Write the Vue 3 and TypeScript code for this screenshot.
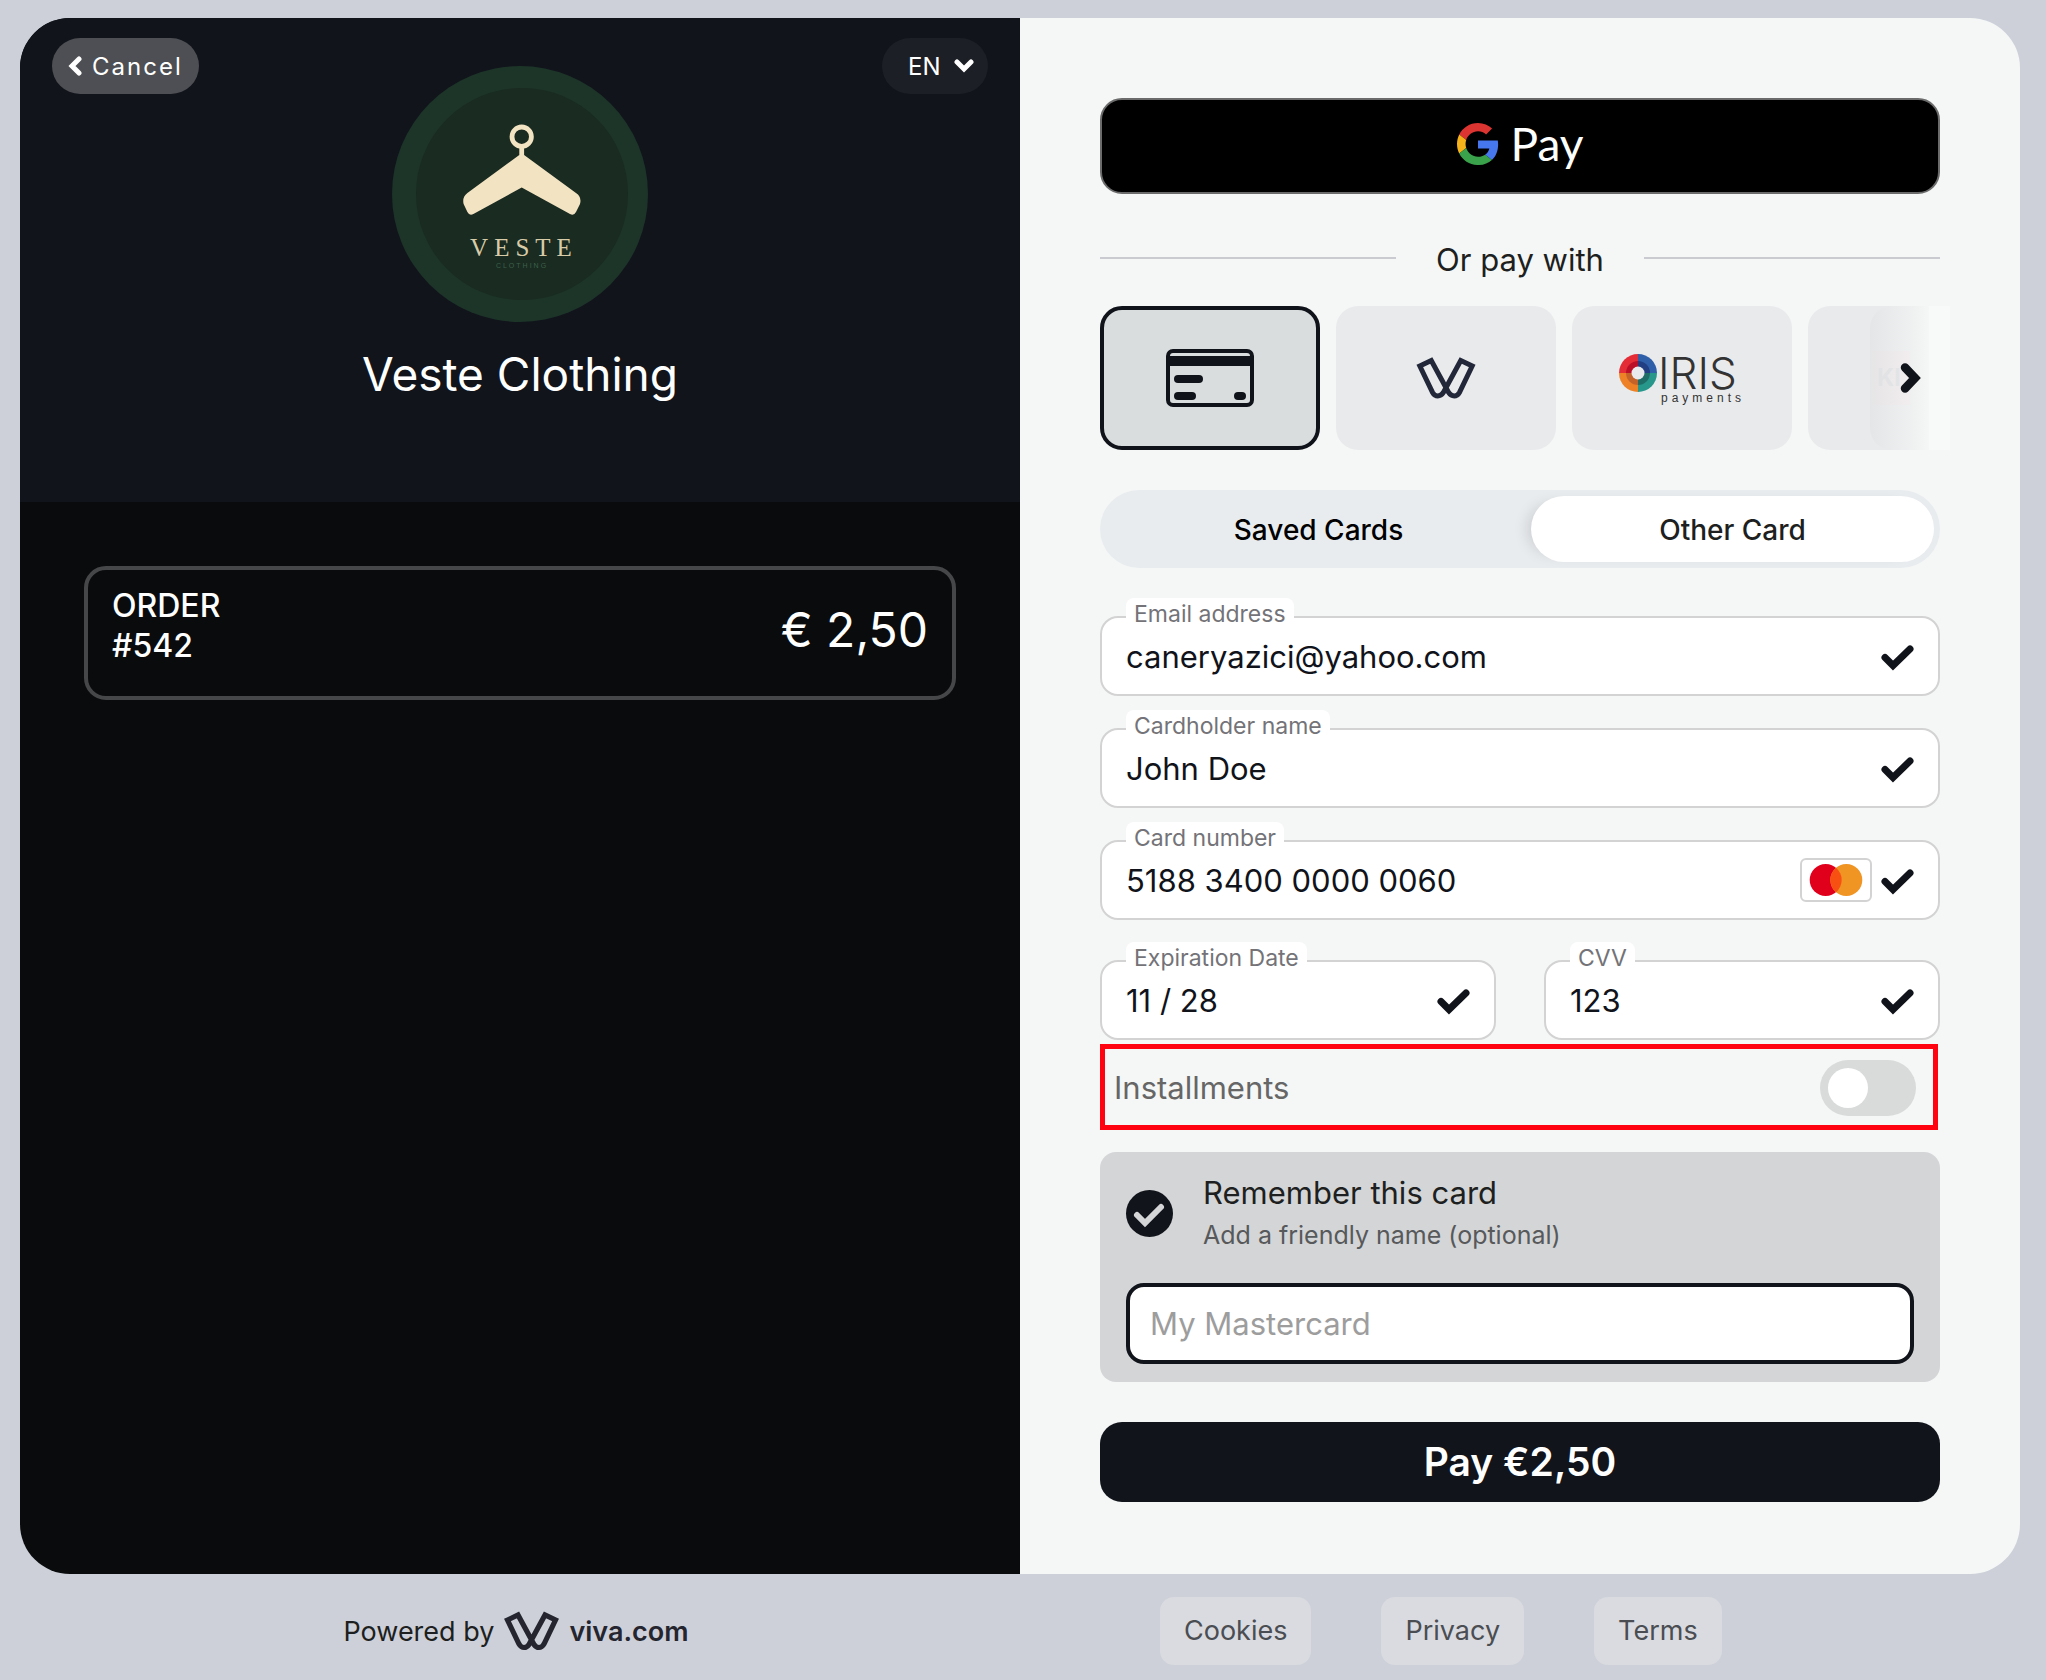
<script setup lang="ts">
import { ref } from 'vue'

interface Field {
  id: string
  label: string
  value: string
  brand?: boolean
}

const wideFields = ref<Field[]>([
  { id: 'email', label: 'Email address', value: 'caneryazici@yahoo.com' },
  { id: 'holder', label: 'Cardholder name', value: 'John Doe' },
  { id: 'number', label: 'Card number', value: '5188 3400 0000 0060', brand: true },
])

const shortFields = ref<Field[]>([
  { id: 'expiry', label: 'Expiration Date', value: '11 / 28' },
  { id: 'cvv', label: 'CVV', value: '123' },
])

const language = ref('EN')
const cardTab = ref<'saved' | 'other'>('other')
const installments = ref(false)
const remember = ref(true)
const friendlyName = ref('')
const footerLinks = ['Cookies', 'Privacy', 'Terms']
</script>

<template>
  <div class="page">
    <main class="checkout">
      <section class="summary">
        <header class="merchant">
          <div class="topbar">
            <button type="button" class="cancel">
              <svg width="14" height="20" viewBox="0 0 14 20" aria-hidden="true">
                <path d="M11 3 L4 10 L11 17" fill="none" stroke="#fff" stroke-width="5" stroke-linecap="round" />
              </svg>
              <span>Cancel</span>
            </button>
            <div class="language">
              <select v-model="language" aria-label="Language">
                <option>EN</option>
              </select>
              <svg width="20" height="14" viewBox="0 0 20 14" aria-hidden="true">
                <path d="M3 3 L10 10 L17 3" fill="none" stroke="#fff" stroke-width="5" stroke-linecap="round" />
              </svg>
            </div>
          </div>
          <svg class="logo" viewBox="0 0 256 256" role="img" aria-label="Veste Clothing logo">
            <circle cx="128" cy="128" r="128" fill="#1d3429" />
            <circle cx="130" cy="128" r="106" fill="#1a2b21" />
            <g fill="#f2e3c2">
              <circle cx="129.700" cy="70.700" r="9.700" fill="none" stroke="#f2e3c2" stroke-width="4.800" />
              <path d="M127.300 81h4.800v8L184 127Q190 131 188 138L184 146Q182 150 178 148L129.700 121.500L81.400 148Q77.400 150 75.400 146L71.600 138Q70 131 75.400 127L127.300 89Z" />
            </g>
            <text x="132" y="190" text-anchor="middle" font-family="Liberation Serif, serif" font-size="25" letter-spacing="6" fill="#d8cba8">VESTE</text>
            <text x="130" y="202" text-anchor="middle" font-family="Liberation Sans, sans-serif" font-size="7" letter-spacing="2" fill="#3a6049">CLOTHING</text>
          </svg>
          <h1>Veste Clothing</h1>
        </header>
        <div class="order">
          <p class="order-name">ORDER<br />#542</p>
          <p class="order-total">€ 2,50</p>
        </div>
      </section>

      <section class="payment">
        <button type="button" class="gpay" aria-label="Pay with Google Pay">
          <svg width="42" height="42" viewBox="2 2 44 44" aria-hidden="true">
            <g transform="translate(2 2) scale(.917)">
              <path fill="#dc3430" d="M24 9.500c3.540 0 6.710 1.220 9.210 3.600l6.850-6.850C35.900 2.380 30.470 0 24 0 14.620 0 6.510 5.380 2.560 13.220l7.980 6.190C12.430 13.720 17.740 9.500 24 9.500z" />
              <path fill="#4677ee" d="M46.980 24.550c0-1.570-.15-3.090-.38-4.550H24v9.020h12.940c-.58 2.960-2.260 5.480-4.780 7.180l7.730 6c4.510-4.180 7.090-10.360 7.090-17.650z" />
              <path fill="#f5b21a" d="M10.530 28.590c-.48-1.450-.76-2.990-.76-4.590s.27-3.140.76-4.590l-7.980-6.190C.92 16.460 0 20.120 0 24c0 3.880.92 7.540 2.560 10.780l7.970-6.190z" />
              <path fill="#3ba24c" d="M24 48c6.480 0 11.930-2.130 15.890-5.810l-7.730-6c-2.150 1.450-4.920 2.300-8.160 2.300-6.260 0-11.570-4.220-13.470-9.910l-7.980 6.190C6.510 42.620 14.620 48 24 48z" />
            </g>
          </svg>
          <span>Pay</span>
        </button>

        <div class="divider"><span>Or pay with</span></div>

        <div class="methods">
          <button type="button" class="method selected" aria-label="Card">
            <svg width="88" height="58" viewBox="0 0 88 58" aria-hidden="true">
              <rect x="2" y="2" width="84" height="54" rx="5" fill="none" stroke="#11131b" stroke-width="4" />
              <g fill="#11131b">
                <rect x="2" y="7" width="84" height="10" />
                <rect x="8" y="26" width="29" height="8" rx="4" />
                <rect x="8" y="43" width="22" height="8" rx="4" />
                <rect x="68" y="43" width="12" height="8" rx="4" />
              </g>
            </svg>
          </button>
          <button type="button" class="method" aria-label="Viva">
            <svg width="60" height="46" viewBox="0 0 55 42" aria-hidden="true">
              <path d="M3.500 10L14 5L30 34.500Q32 37.500 35 37.500Q38 37.500 40 34L51.500 10L41 5L25 34.500Q23 37.500 20 37.500Q17 37.500 15 34Z" fill="none" stroke="#23273a" stroke-width="4.600" />
            </svg>
          </button>
          <button type="button" class="method" aria-label="IRIS payments">
            <svg width="130" height="74" viewBox="-2 -12 130 74" aria-hidden="true">
              <path fill="#e32c36" d="M19 1A19 19 0 0 0 0 20H19Z" />
              <path fill="#2f5fa8" d="M19 1A19 19 0 0 1 38 20H19Z" />
              <path fill="#ee8126" d="M19 39A19 19 0 0 1 0 20H19Z" />
              <path fill="#27978c" d="M19 39A19 19 0 0 0 38 20H19Z" />
              <path fill="#bb0f28" d="M19 8A12 12 0 0 0 7 20H19Z" />
              <path fill="#213f82" d="M19 8A12 12 0 0 1 31 20H19Z" />
              <path fill="#c4622a" d="M19 32A12 12 0 0 1 7 20H19Z" />
              <path fill="#1e6e67" d="M19 32A12 12 0 0 0 31 20H19Z" />
              <circle cx="19" cy="20" r="6.500" fill="#e9eaec" />
              <text x="39" y="36" font-family="Inter, sans-serif" font-size="44" font-weight="300" fill="#333">IRIS</text>
              <text x="42" y="49" font-family="Liberation Sans, sans-serif" font-size="12" letter-spacing="4" fill="#333">payments</text>
            </svg>
          </button>
          <button type="button" class="method partial" aria-label="Klarna"><span>Kl</span></button>
          <button type="button" class="next" aria-label="More payment methods">
            <svg width="22" height="32" viewBox="0 0 22 32" aria-hidden="true">
              <path d="M6 5.500L16 16L6 26.500" fill="none" stroke="#11131b" stroke-width="8.500" stroke-linecap="round" />
            </svg>
          </button>
        </div>

        <div class="tabs">
          <button type="button" :class="{ active: cardTab === 'saved' }" @click="cardTab = 'saved'">Saved Cards</button>
          <button type="button" :class="{ active: cardTab === 'other' }" @click="cardTab = 'other'">Other Card</button>
        </div>

        <div class="fields">
          <div v-for="field in wideFields" :key="field.id" class="field">
            <label :for="field.id">{{ field.label }}</label>
            <input :id="field.id" v-model="field.value" type="text" />
            <svg v-if="field.brand" class="brand" width="72" height="44" viewBox="0 0 72 44" role="img" aria-label="Mastercard">
              <rect x="1" y="1" width="70" height="42" rx="5" fill="#fff" stroke="#d3d3d3" stroke-width="2" />
              <circle cx="25.700" cy="22" r="16" fill="#e1001c" />
              <circle cx="46.300" cy="22" r="16" fill="#f09423" />
              <path d="M36 9.800A16 16 0 0 1 36 34.200A16 16 0 0 1 36 9.800Z" fill="#f84f12" />
            </svg>
            <svg class="tick" width="34" height="26" viewBox="0 0 34 26" aria-hidden="true">
              <path d="M5 12.500L13 20.500L30 4" fill="none" stroke="#11131b" stroke-width="7" stroke-linecap="round" />
            </svg>
          </div>
        </div>

        <div class="field-row">
          <div v-for="field in shortFields" :key="field.id" class="field">
            <label :for="field.id">{{ field.label }}</label>
            <input :id="field.id" v-model="field.value" type="text" />
            <svg class="tick" width="34" height="26" viewBox="0 0 34 26" aria-hidden="true">
              <path d="M5 12.500L13 20.500L30 4" fill="none" stroke="#11131b" stroke-width="7" stroke-linecap="round" />
            </svg>
          </div>
        </div>

        <div class="installments">
          <label for="installments">Installments</label>
          <input id="installments" v-model="installments" type="checkbox" role="switch" />
        </div>

        <div class="remember">
          <div class="remember-head">
            <span class="round-check">
              <input id="remember" v-model="remember" type="checkbox" />
              <svg v-if="remember" width="34" height="26" viewBox="0 0 34 26" aria-hidden="true">
                <path d="M5 13L13 21L29 5" fill="none" stroke="#d4d5d7" stroke-width="6" stroke-linecap="round" />
              </svg>
            </span>
            <div class="remember-text">
              <label for="remember">Remember this card</label>
              <label for="friendly" class="hint">Add a friendly name (optional)</label>
            </div>
          </div>
          <input id="friendly" v-model="friendlyName" class="friendly" type="text" placeholder="My Mastercard" />
        </div>

        <button type="button" class="pay">Pay €2,50</button>
      </section>
    </main>

    <footer class="footer">
      <div class="powered">
        <span>Powered by</span>
        <svg width="55" height="42" viewBox="0 0 55 42" aria-hidden="true">
          <path d="M3.500 9L14 4L30 33.500Q32 36.500 35 36.500Q38 36.500 40 33L51.500 9L41 4L25 33.500Q23 36.500 20 36.500Q17 36.500 15 33Z" fill="none" stroke="#24252f" stroke-width="5.200" />
        </svg>
        <strong>viva.com</strong>
      </div>
      <nav class="links">
        <a v-for="link in footerLinks" :key="link" href="#">{{ link }}</a>
      </nav>
    </footer>
  </div>
</template>

<style>
body {
  background: #cdd0d9;
}
</style>

<style scoped>
.page,
.page * {
  box-sizing: border-box;
}

.page {
  padding: 18px 26px 15px 20px;
  background: #cdd0d9;
  color: #1d1f20;
  font-family: Inter, 'Liberation Sans', sans-serif;
  font-size: 31px;
  line-height: 40px;
}

button,
input,
select {
  margin: 0;
  border: 0;
  font: inherit;
  color: inherit;
}

svg {
  flex: none;
  display: block;
}

.checkout {
  display: grid;
  grid-template-columns: 1fr 1fr;
  border-radius: 50px;
  overflow: hidden;
}

.summary {
  background: #090b0d;
  color: #fff;
}

.merchant {
  display: flex;
  flex-direction: column;
  align-items: center;
  padding: 20px 32px 98px;
  background: #11141b;
}

.topbar {
  display: flex;
  justify-content: space-between;
  width: 100%;
  font-size: 24px;
  line-height: 32px;
}

.cancel {
  display: flex;
  align-items: center;
  gap: 10px;
  height: 56px;
  padding: 0 16px;
  border-radius: 28px;
  background: #4e4f54;
  letter-spacing: 2px;
}

.cancel span {
  padding-top: 2px;
}

.language {
  position: relative;
  display: flex;
}

.language select {
  width: 106px;
  height: 56px;
  padding: 2px 26px 0;
  border-radius: 28px;
  background: #1d1f26;
  appearance: none;
}

.language svg {
  position: absolute;
  right: 14px;
  top: 21px;
  pointer-events: none;
}

.logo {
  width: 256px;
  height: 256px;
  margin-top: -28px;
}

h1 {
  margin: 22px 0 0;
  font-size: 46px;
  line-height: 60px;
  font-weight: 400;
}

.order {
  display: flex;
  justify-content: space-between;
  margin: 64px;
  padding: 16px 24px 30px;
  border: 4px solid #464749;
  border-radius: 22px;
}

.order p {
  margin: 0;
}

.order-name {
  font-size: 32px;
  font-weight: 500;
}

.order-total {
  padding-top: 14px;
  font-size: 48px;
  line-height: 60px;
}

.payment {
  display: flex;
  flex-direction: column;
  min-width: 0;
  padding: 80px 80px 72px;
  background: #f5f7f6;
}

.gpay {
  display: flex;
  align-items: center;
  justify-content: center;
  gap: 12px;
  height: 96px;
  padding: 0 0 4px;
  border: 2px solid #6b6b6b;
  border-radius: 22px;
  background: #000;
  color: #fff;
  font-family: Lato, sans-serif;
  font-size: 46px;
  line-height: 60px;
}

.divider {
  display: flex;
  align-items: center;
  gap: 40px;
  margin: 44px 0 28px;
}

.divider span {
  padding-top: 2px;
  margin-bottom: -2px;
}

.divider::before,
.divider::after {
  content: '';
  flex: 1;
  height: 2px;
  background: #c9cbd1;
}

.methods {
  position: relative;
  display: flex;
  gap: 16px;
  margin-right: -10px;
  overflow: hidden;
}

.method {
  display: flex;
  flex: none;
  align-items: center;
  justify-content: center;
  width: 220px;
  height: 144px;
  padding: 0;
  border-radius: 22px;
  background: #e9eaec;
}

.method.selected {
  border: 4px solid #11131b;
  background: #d9dddd;
}

.method.partial {
  justify-content: flex-start;
  padding-left: 65px;
}

.partial span {
  width: 37px;
  padding: 7px 0 7px 4px;
  background: #f6dfe3;
  color: #b9bdc6;
  font-size: 24px;
  font-weight: 700;
  text-align: left;
}

.next {
  position: absolute;
  right: 0;
  top: 0;
  display: flex;
  align-items: center;
  width: 80px;
  height: 144px;
  padding: 0 29px;
  border-radius: 22px 0 0 22px;
  background: linear-gradient(90deg, rgba(228, 229, 230, 0.9), rgba(240, 242, 242, 0.75) 40px, #f5f7f6 59px, #f8f9f9 59px);
}

.tabs {
  display: grid;
  grid-template-columns: 425fr 403fr;
  height: 78px;
  margin-top: 40px;
  padding: 6px;
  border-radius: 39px;
  background: #e9ecef;
  font-size: 28px;
  font-weight: 500;
}

.tabs button {
  padding: 2px 0 0;
  border-radius: 33px;
  background: transparent;
  color: #000;
}

.tabs .active {
  background: #fff;
  color: #1d1f20;
  box-shadow: -12px 0 16px -10px rgba(0, 0, 0, 0.16);
}

.fields {
  display: grid;
  gap: 32px;
  margin-top: 48px;
}

.field-row {
  display: grid;
  grid-template-columns: 1fr 1fr;
  gap: 48px;
  margin-top: 40px;
}

.field {
  position: relative;
  display: flex;
  align-items: center;
  gap: 8px;
  height: 80px;
  padding: 0 24px;
  border: 2px solid #d3d3d3;
  border-radius: 18px;
  background: #fff;
  color: #11131b;
}

.field label {
  position: absolute;
  left: 24px;
  top: -20px;
  height: 32px;
  padding: 0 8px;
  border-radius: 8px 8px 0 0;
  background: #fff;
  color: #737378;
  font-size: 23px;
  line-height: 32px;
}

.field input {
  flex: 1;
  width: 100%;
  min-width: 0;
  padding: 2px 0 0;
  background: transparent;
  outline: 0;
}

.tick {
  margin-top: 4px;
}

.installments {
  display: flex;
  align-items: center;
  justify-content: space-between;
  height: 86px;
  margin: 4px 2px 22px 0;
  padding: 2px 17px 0 9px;
  border: 5px solid #ff0410;
  color: #666;
}

.installments input {
  width: 96px;
  height: 56px;
  padding: 8px;
  border-radius: 28px;
  background: #d9dbdb;
  appearance: none;
}

.installments input::before {
  content: '';
  display: block;
  width: 40px;
  height: 40px;
  border-radius: 50%;
  background: #fff;
}

.installments input:checked::before {
  margin-left: 40px;
}

.remember {
  padding: 21px 26px 18px;
  border-radius: 16px;
  background: #d4d5d7;
}

.remember-head {
  display: flex;
  align-items: center;
  gap: 30px;
  height: 80px;
}

.round-check {
  position: relative;
  display: flex;
}

.round-check input {
  width: 47px;
  height: 47px;
  border-radius: 50%;
  background: #11141b;
  appearance: none;
}

.round-check svg {
  position: absolute;
  left: 6px;
  top: 12px;
  pointer-events: none;
}

.remember-text {
  display: flex;
  flex-direction: column;
  gap: 4px;
}

.remember-text .hint {
  color: #57595b;
  font-size: 25px;
  line-height: 36px;
}

.friendly {
  width: 100%;
  height: 81px;
  margin-top: 30px;
  padding: 0 20px;
  border: 4px solid #11141b;
  border-radius: 18px;
  background: #fff;
}

.friendly::placeholder {
  color: #9d9d9d;
  opacity: 1;
}

.pay {
  height: 80px;
  margin-top: 40px;
  border-radius: 22px;
  background: #11141b;
  color: #fff;
  font-size: 39px;
  font-weight: 600;
}

.footer {
  display: grid;
  grid-template-columns: 1fr 1fr;
  align-items: center;
  margin-top: 23px;
  font-size: 27px;
}

.powered {
  display: flex;
  align-items: center;
  justify-content: center;
  gap: 10px;
  padding: 2px 8px 0 0;
}

.powered strong {
  color: #24252f;
  font-weight: 600;
}

.links {
  display: flex;
  gap: 70px;
  padding-left: 140px;
}

.links a {
  padding: 14px 24px;
  border-radius: 14px;
  background: #d9dbe0;
  color: #4a4d52;
  text-decoration: none;
}
</style>
